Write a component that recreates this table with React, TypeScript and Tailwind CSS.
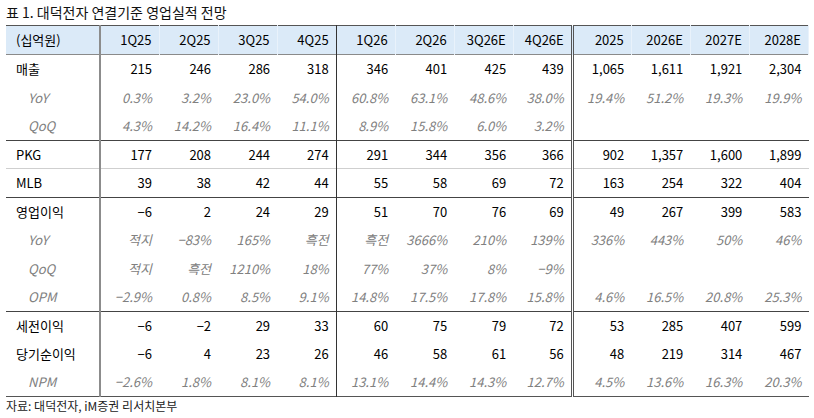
const cols = ["1Q25", "2Q25", "3Q25", "4Q25", "1Q26", "2Q26", "3Q26E", "4Q26E", "2025", "2026E", "2027E", "2028E"]

type Row = { label: string; sub?: boolean; vals: string[]; line?: string }

const rows: Row[] = [
  { label: "매출", vals: ["215", "246", "286", "318", "346", "401", "425", "439", "1,065", "1,611", "1,921", "2,304"] },
  { label: "YoY", sub: true, vals: ["0.3%", "3.2%", "23.0%", "54.0%", "60.8%", "63.1%", "48.6%", "38.0%", "19.4%", "51.2%", "19.3%", "19.9%"] },
  { label: "QoQ", sub: true, vals: ["4.3%", "14.2%", "16.4%", "11.1%", "8.9%", "15.8%", "6.0%", "3.2%", "", "", "", ""], line: "border-b border-[#444]" },
  { label: "PKG", vals: ["177", "208", "244", "274", "291", "344", "356", "366", "902", "1,357", "1,600", "1,899"], line: "border-b border-[#cfcfcf]" },
  { label: "MLB", vals: ["39", "38", "42", "44", "55", "58", "69", "72", "163", "254", "322", "404"], line: "border-b border-[#444]" },
  { label: "영업이익", vals: ["−6", "2", "24", "29", "51", "70", "76", "69", "49", "267", "399", "583"] },
  { label: "YoY", sub: true, vals: ["적지", "−83%", "165%", "흑전", "흑전", "3666%", "210%", "139%", "336%", "443%", "50%", "46%"] },
  { label: "QoQ", sub: true, vals: ["적지", "흑전", "1210%", "18%", "77%", "37%", "8%", "−9%", "", "", "", ""] },
  { label: "OPM", sub: true, vals: ["−2.9%", "0.8%", "8.5%", "9.1%", "14.8%", "17.5%", "17.8%", "15.8%", "4.6%", "16.5%", "20.8%", "25.3%"], line: "border-b border-[#444]" },
  { label: "세전이익", vals: ["−6", "−2", "29", "33", "60", "75", "79", "72", "53", "285", "407", "599"] },
  { label: "당기순이익", vals: ["−6", "4", "23", "26", "46", "58", "61", "56", "48", "219", "314", "467"] },
  { label: "NPM", sub: true, vals: ["−2.6%", "1.8%", "8.1%", "8.1%", "13.1%", "14.4%", "14.3%", "12.7%", "4.5%", "13.6%", "16.3%", "20.3%"], line: "border-b border-[#555]" },
]

// vertical group lines after label, 4Q25 and 4Q26E
function sep(i: number) {
  if (i === 3) return "border-r border-r-[#333]"
  if (i === 7) return "border-r-[3px] border-double border-r-[#555]"
  return ""
}

export default function App() {
  return (
    <div className="w-[814px] h-[418px] bg-white px-[6px] font-['Noto_Sans_CJK_KR',sans-serif] text-black">
      <div className="h-[25px] leading-[24px] text-[14px] text-[#111]">표 1. 대덕전자 연결기준 영업실적 전망</div>
      <table className="w-[803px] table-fixed border-collapse text-[13px]">
        <colgroup>
          <col className="w-[94px]" />
          {cols.map((c) => (
            <col key={c} />
          ))}
        </colgroup>
        <thead>
          <tr className="h-[29px] bg-[#dbeaf8] border-t border-t-[#555] border-b border-b-[#8a8a8a]">
            <th className="pl-[10px] text-left font-normal border-r-2 border-r-[#8c8c8c]">(십억원)</th>
            {cols.map((c, i) => (
              <th
                key={c}
                className={`pr-[7px] text-right font-normal ${i === 3 || i === 7 ? sep(i) : "border-r border-r-[#e9f2fb]"}`}
              >
                {c}
              </th>
            ))}
          </tr>
        </thead>
        <tbody>
          {rows.map((r, ri) => (
            <tr key={ri} className={`h-[28.5px] ${r.line ?? ""}`}>
              <td
                className={`border-r-2 border-r-[#8c8c8c] ${r.sub ? "pl-[22px] italic text-[#808080]" : "pl-[10px]"}`}
              >
                {r.label}
              </td>
              {r.vals.map((v, i) => (
                <td
                  key={i}
                  className={`pr-[7px] text-right ${sep(i)} ${r.sub ? "italic text-[#808080]" : ""}`}
                >
                  {v}
                </td>
              ))}
            </tr>
          ))}
        </tbody>
      </table>
      <div className="h-[18px] leading-[18px] text-[12px] text-[#222]">자료: 대덕전자, iM증권 리서치본부</div>
    </div>
  )
}
